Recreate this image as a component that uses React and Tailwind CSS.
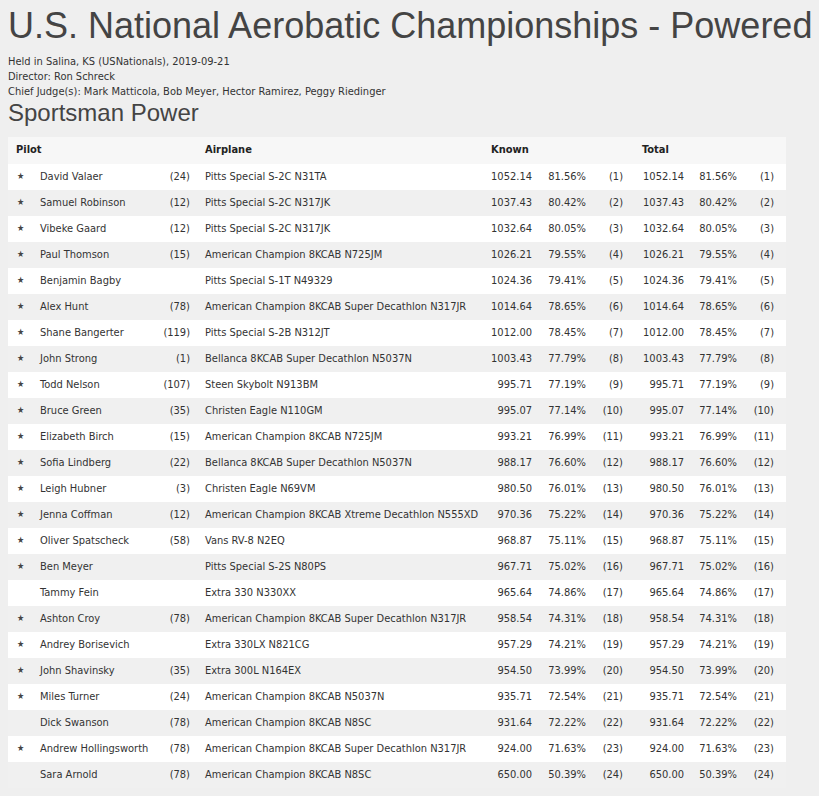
import React from "react";

const rows = [
  [true, "David Valaer", "(24)", "Pitts Special S-2C N31TA", "1052.14", "81.56%", "(1)"],
  [true, "Samuel Robinson", "(12)", "Pitts Special S-2C N317JK", "1037.43", "80.42%", "(2)"],
  [true, "Vibeke Gaard", "(12)", "Pitts Special S-2C N317JK", "1032.64", "80.05%", "(3)"],
  [true, "Paul Thomson", "(15)", "American Champion 8KCAB N725JM", "1026.21", "79.55%", "(4)"],
  [true, "Benjamin Bagby", "", "Pitts Special S-1T N49329", "1024.36", "79.41%", "(5)"],
  [true, "Alex Hunt", "(78)", "American Champion 8KCAB Super Decathlon N317JR", "1014.64", "78.65%", "(6)"],
  [true, "Shane Bangerter", "(119)", "Pitts Special S-2B N312JT", "1012.00", "78.45%", "(7)"],
  [true, "John Strong", "(1)", "Bellanca 8KCAB Super Decathlon N5037N", "1003.43", "77.79%", "(8)"],
  [true, "Todd Nelson", "(107)", "Steen Skybolt N913BM", "995.71", "77.19%", "(9)"],
  [true, "Bruce Green", "(35)", "Christen Eagle N110GM", "995.07", "77.14%", "(10)"],
  [true, "Elizabeth Birch", "(15)", "American Champion 8KCAB N725JM", "993.21", "76.99%", "(11)"],
  [true, "Sofia Lindberg", "(22)", "Bellanca 8KCAB Super Decathlon N5037N", "988.17", "76.60%", "(12)"],
  [true, "Leigh Hubner", "(3)", "Christen Eagle N69VM", "980.50", "76.01%", "(13)"],
  [true, "Jenna Coffman", "(12)", "American Champion 8KCAB Xtreme Decathlon N555XD", "970.36", "75.22%", "(14)"],
  [true, "Oliver Spatscheck", "(58)", "Vans RV-8 N2EQ", "968.87", "75.11%", "(15)"],
  [true, "Ben Meyer", "", "Pitts Special S-2S N80PS", "967.71", "75.02%", "(16)"],
  [false, "Tammy Fein", "", "Extra 330 N330XX", "965.64", "74.86%", "(17)"],
  [true, "Ashton Croy", "(78)", "American Champion 8KCAB Super Decathlon N317JR", "958.54", "74.31%", "(18)"],
  [true, "Andrey Borisevich", "", "Extra 330LX N821CG", "957.29", "74.21%", "(19)"],
  [true, "John Shavinsky", "(35)", "Extra 300L N164EX", "954.50", "73.99%", "(20)"],
  [true, "Miles Turner", "(24)", "American Champion 8KCAB N5037N", "935.71", "72.54%", "(21)"],
  [false, "Dick Swanson", "(78)", "American Champion 8KCAB N8SC", "931.64", "72.22%", "(22)"],
  [true, "Andrew Hollingsworth", "(78)", "American Champion 8KCAB Super Decathlon N317JR", "924.00", "71.63%", "(23)"],
  [false, "Sara Arnold", "(78)", "American Champion 8KCAB N8SC", "650.00", "50.39%", "(24)"],
];

const grid =
  "grid grid-cols-[24px_127px_39px_285px_57px_54px_40px_58px_53px_41px] items-center";

export default function App() {
  return (
    <div
      className="min-h-[796px] w-[819px] bg-[#efefef] px-2 text-[#333]"
      style={{ fontFamily: '"DejaVu Sans Condensed", "DejaVu Sans", Verdana, sans-serif' }}
    >
      <h1 className="pt-[5px] text-[36px] leading-[42px] text-[#444] whitespace-nowrap [font-family:'Liberation_Sans',Arial,sans-serif]">
        U.S. National Aerobatic Championships - Powered
      </h1>
      <div className="mt-[7px] text-[11px] leading-[15px]">
        <div>Held in Salina, KS (USNationals), 2019-09-21</div>
        <div>Director: Ron Schreck</div>
        <div>Chief Judge(s): Mark Matticola, Bob Meyer, Hector Ramirez, Peggy Riedinger</div>
      </div>
      <h2 className="text-[24px] leading-[28px] text-[#444] [font-family:'Liberation_Sans',Arial,sans-serif]">
        Sportsman Power
      </h2>
      <div className="mt-[10px] w-[778px] text-[11px]">
        <div className={`${grid} h-[27px] bg-[#f7f7f7] font-bold text-[#222]`}>
          <div className="col-span-3 pl-2">Pilot</div>
          <div className="pl-[7px]">Airplane</div>
          <div className="col-span-3 pl-2">Known</div>
          <div className="col-span-3 pl-2">Total</div>
        </div>
        {rows.map((r, i) => (
          <div
            key={i}
            className={`${grid} h-[26px] ${i % 2 === 0 ? "bg-white" : "bg-[#f0f0f0]"}`}
          >
            <div className="pl-[9px] text-[9px] text-[#444]">{r[0] ? "★" : ""}</div>
            <div className="pl-2 whitespace-nowrap">{r[1]}</div>
            <div className="pr-2 text-right">{r[2]}</div>
            <div className="pl-[7px] whitespace-nowrap">{r[3]}</div>
            <div className="pr-2 text-right">{r[4]}</div>
            <div className="pr-2 text-right">{r[5]}</div>
            <div className="pr-[11px] text-right">{r[6]}</div>
            <div className="pr-2 text-right">{r[4]}</div>
            <div className="pr-2 text-right">{r[5]}</div>
            <div className="pr-[12px] text-right">{r[6]}</div>
          </div>
        ))}
      </div>
    </div>
  );
}
